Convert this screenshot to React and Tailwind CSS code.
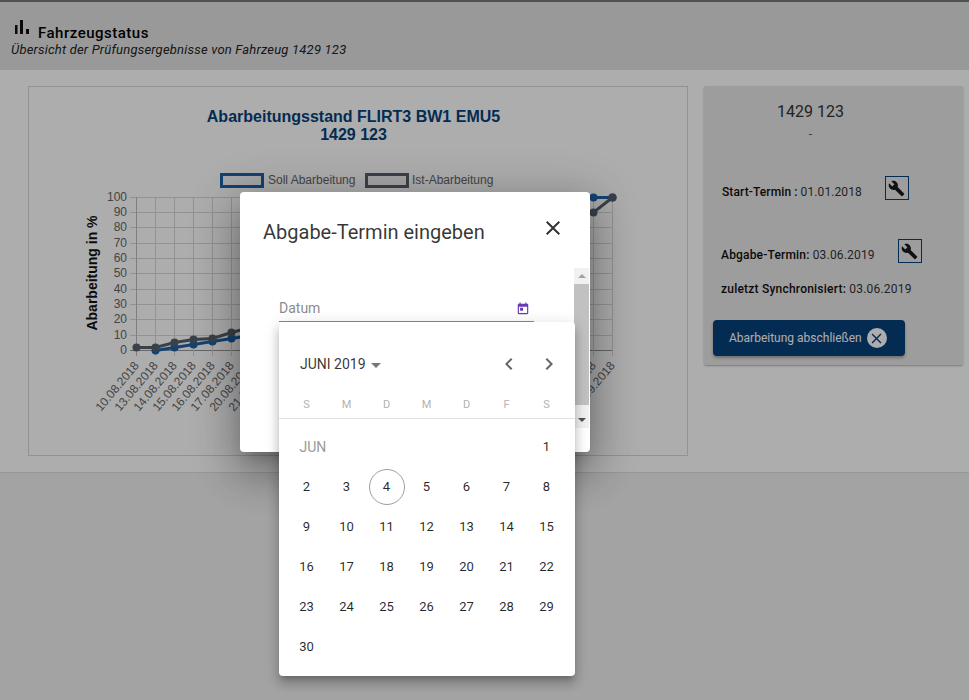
const BLUE = "#1d62a8";
const NAVY = "#07417a";
const DARK = "#58606e";

const dates = ["10.08.2018", "13.08.2018", "14.08.2018", "15.08.2018", "16.08.2018", "17.08.2018", "20.08.2018", "21.08.2018", "22.08.2018", "23.08.2018", "24.08.2018", "27.08.2018", "28.08.2018", "29.08.2018", "30.08.2018", "31.08.2018", "03.09.2018", "04.09.2018", "05.09.2018", "06.09.2018", "07.09.2018", "10.09.2018", "11.09.2018", "12.09.2018", "13.09.2018", "14.09.2018"];
const ist = [2, 2, 5, 7, 8, 12, 15, 20, 25, 30, 35, 40, 44, 48, 52, 56, 60, 64, 68, 72, 76, 80, 84, 87, 90, 100];
const soll = [null, 0, 2, 4, 6, 8, 10, 14, 20, 26, 32, 38, 44, 50, 56, 62, 68, 74, 80, 86, 92, 96, 98, 100, 100, 100];

const px = (i) => Math.round(136 + i * 19.05) + 0.5;
const py = (v) => Math.round(350 - v * 1.533) + 0.5;

function Wrench() {
	return (
		<svg viewBox="0 0 24 24" className="w-[17px] h-[17px]" fill="#1a1a1a">
			<path d="M22.7 19l-9.1-9.1c.9-2.3.4-5-1.5-6.9-2-2-5-2.4-7.4-1.3L9 6 6 9 1.6 4.7C.4 7.1.9 10.1 2.9 12.1c1.9 1.9 4.6 2.4 6.9 1.5l9.1 9.1c.4.4 1 .4 1.4 0l2.3-2.3c.5-.4.5-1.1.1-1.4z" />
		</svg>
	);
}

function CloseIcon({ className, fill }) {
	return (
		<svg viewBox="0 0 24 24" className={className} fill={fill}>
			<path d="M19 6.41 17.59 5 12 10.59 6.41 5 5 6.41 10.59 12 5 17.59 6.41 19 12 13.41 17.59 19 19 17.59 13.41 12z" />
		</svg>
	);
}

function Chevron({ d }) {
	return (
		<svg viewBox="0 0 24 24" className="w-[24px] h-[24px]" fill="#666">
			<path d={d} />
		</svg>
	);
}

function Chart() {
	const line = (data) =>
		data
			.map((v, i) => (v === null ? null : `${px(i)},${py(v)}`))
			.filter(Boolean)
			.join(" ");
	return (
		<svg viewBox="29 150 658 305" className="block w-[658px] h-[305px]">
			<rect x="221.5" y="174.5" width="41" height="12" fill="#f4f7fa" stroke={BLUE} strokeWidth="3" />
			<text x="268" y="184" fontSize="12" fill="#666">Soll Abarbeitung</text>
			<rect x="366.5" y="174.5" width="41" height="12" fill="#f4f4f4" stroke={DARK} strokeWidth="3" />
			<text x="412" y="184" fontSize="12" fill="#666">Ist-Abarbeitung</text>

			{Array.from({ length: 11 }, (_, i) => (
				<g key={i}>
					<line x1="130" x2="613" y1={py(i * 10)} y2={py(i * 10)} stroke={i === 0 ? "#999" : "#d8d8d8"} />
					<text x="127" y={py(i * 10) + 3} fontSize="12" fill="#666" textAnchor="end">{i * 10}</text>
				</g>
			))}
			{dates.map((d, i) => (
				<g key={d}>
					<line x1={px(i)} x2={px(i)} y1="197" y2="356" stroke={i === 0 ? "#bbb" : "#d8d8d8"} />
					<text
						x={px(i) + 3}
						y="366"
						fontSize="12"
						fill="#666"
						textAnchor="end"
						transform={`rotate(-50 ${px(i) + 3} 366)`}
					>
						{d}
					</text>
				</g>
			))}
			<text
				x="97"
				y="273"
				fontSize="14"
				fontWeight="700"
				fill="#111"
				textAnchor="middle"
				transform="rotate(-90 97 273)"
			>
				Abarbeitung in %
			</text>

			<polyline points={line(soll)} fill="none" stroke={BLUE} strokeWidth="3" />
			<polyline points={line(ist)} fill="none" stroke={DARK} strokeWidth="3" />
			{soll.map((v, i) => v !== null && <circle key={i} cx={px(i)} cy={py(v)} r="4" fill={BLUE} />)}
			{ist.map((v, i) => <circle key={i} cx={px(i)} cy={py(v)} r="4" fill={DARK} />)}
		</svg>
	);
}

function DatePicker() {
	const weeks = [
		[2, 3, 4, 5, 6, 7, 8],
		[9, 10, 11, 12, 13, 14, 15],
		[16, 17, 18, 19, 20, 21, 22],
		[23, 24, 25, 26, 27, 28, 29],
		[30],
	];
	return (
		<div className="absolute left-[39px] top-[130px] w-[296px] h-[354px] bg-white rounded-[4px] shadow-[0_5px_5px_-3px_rgba(0,0,0,0.2),0_8px_10px_1px_rgba(0,0,0,0.14),0_3px_14px_2px_rgba(0,0,0,0.12)] z-10">
			<div className="flex items-center h-[24px] mt-[30px] pl-[21px] pr-[14px]">
				<span className="text-[14px] text-[rgba(0,0,0,0.8)]">JUNI 2019</span>
				<span className="ml-[5px] mt-[2px] w-0 h-0 border-x-[5px] border-x-transparent border-t-[5px] border-t-[#777]" />
				<span className="ml-auto"><Chevron d="M15.41 7.41 14 6l-6 6 6 6 1.41-1.41L10.83 12z" /></span>
				<span className="ml-[16px]"><Chevron d="M10 6 8.59 7.41 13.17 12l-4.58 4.59L10 18l6-6z" /></span>
			</div>
			<div className="grid grid-cols-7 w-[280px] ml-[7.5px] mt-[21px] h-[16px] items-center text-center text-[11px] text-[#b3b3b3]">
				{["S", "M", "D", "M", "D", "F", "S"].map((d, i) => (
					<span key={i}>{d}</span>
				))}
			</div>
			<div className="h-px bg-[#e0e0e0] mt-[5px]" />
			<div className="grid grid-cols-7 w-[280px] ml-[7.5px] mt-[8px] auto-rows-[40px] items-center text-center text-[13px] text-[rgba(0,0,0,0.85)]">
				<span className="col-span-6 text-left pl-[13px] text-[14px] text-[#9a9a9a]">JUN</span>
				<span>1</span>
				{weeks.flat().map((d) => (
					<span key={d} className="flex justify-center items-center">
						{d === 4 ? (
							<span className="w-[36px] h-[36px] flex items-center justify-center rounded-full border border-[#9e9e9e]">4</span>
						) : (
							d
						)}
					</span>
				))}
			</div>
		</div>
	);
}

function Modal() {
	return (
		<div className="absolute left-[240px] top-[192px] w-[350px] h-[260px] bg-white rounded-[4px] shadow-[0_11px_15px_-7px_rgba(0,0,0,0.2),0_24px_38px_3px_rgba(0,0,0,0.18),0_9px_46px_8px_rgba(0,0,0,0.2)] font-['Roboto',sans-serif]">
			<div className="flex items-center justify-between h-[76px] pl-[23px] pr-[25px]">
				<h2 className="text-[20px] text-[rgba(0,0,0,0.8)] mt-[4px]">Abgabe-Termin eingeben</h2>
				<CloseIcon className="w-[24px] h-[24px] mb-[4px]" fill="#333" />
			</div>
			<div className="flex h-[160px] justify-between">
				<div className="w-[255px] ml-[39px] h-[54px] flex items-end border-b border-[#8a8a8a]">
					<div className="flex items-center justify-between w-full pb-[2px]">
						<span className="text-[14px] text-[#8c8c8c]">Datum</span>
						<svg viewBox="0 0 24 24" className="w-[14px] h-[14px] mr-[4px]" fill="#673ab7">
							<path d="M19 3h-1V1h-2v2H8V1H6v2H5C3.9 3 3 3.9 3 5v14c0 1.1.9 2 2 2h14c1.1 0 2-.9 2-2V5c0-1.1-.9-2-2-2zm0 16H5V8h14v11zM7 10h5v5H7z" />
						</svg>
					</div>
				</div>
				<div className="w-[15px] mr-px bg-[#f1f1f1] flex flex-col items-center">
					<span className="mt-[6px] w-0 h-0 border-x-[4px] border-x-transparent border-b-[4px] border-b-[#a3a3a3]" />
					<div className="w-full h-[121px] mt-[6px] bg-[#c1c1c1]" />
					<span className="mt-[13px] w-0 h-0 border-x-[4px] border-x-transparent border-t-[4px] border-t-[#505050]" />
				</div>
			</div>
			<DatePicker />
		</div>
	);
}

export default function App() {
	return (
		<div className="relative h-[700px] overflow-hidden bg-[#f0f0f0] font-['Roboto',sans-serif]">
			<header className="h-[70px] bg-[#e2e2e2] border-t-2 border-[#777] pl-[11px]">
				<div className="flex items-end h-[37px]">
					<svg viewBox="0 0 16 14" className="w-[16px] h-[14px] ml-[4px] mb-[5px] shrink-0" fill="#111">
						<rect x="0" y="5" width="2.5" height="9" />
						<rect x="5" y="0" width="3" height="14" />
						<rect x="11" y="9" width="3" height="5" />
					</svg>
					<h1 className="ml-[7px] text-[15px] leading-[18px] font-medium text-black tracking-[0.5px] mb-[-3px]">Fahrzeugstatus</h1>
				</div>
				<p className="text-[13px] leading-[16px] italic text-[#222] mt-[3px] tracking-[0.2px]">Übersicht der Prüfungsergebnisse von Fahrzeug 1429 123</p>
			</header>

			<main className="flex items-start h-[403px] pt-[16px] pl-[28px] bg-white border-b border-[#ddd]">
				<section className="w-[660px] h-[370px] border border-[#d8d8d8] font-['Liberation_Sans',sans-serif]">
					<div className="h-[63px] pt-[21px] pr-[9px] text-center text-[16px] leading-[18px] font-bold text-[#07417a]">
						<p>Abarbeitungsstand FLIRT3 BW1 EMU5</p>
						<p>1429 123</p>
					</div>
					<Chart />
				</section>

				<aside className="w-[259px] h-[279px] ml-[16px] bg-[#e8e8e8] rounded-[2px] shadow-[0_1px_2px_rgba(0,0,0,0.3)] pl-[9px] flex flex-col">
					<div className="w-[195px] text-center mt-[17px] text-[16px] leading-[18px] text-[#333]">1429 123</div>
					<div className="w-[195px] text-center mt-[5px] text-[12px] leading-[16px] text-[#555]">-</div>
					<div className="flex items-center h-[24px] mt-[34px] ml-[9px] text-[12px] text-[#333] tracking-[0.1px]">
						<span className="mt-[8px]"><b className="font-medium text-[#111]">Start-Termin : </b>01.01.2018</span>
						<span className="ml-[23px] w-[24px] h-[24px] border border-[#07417a] flex items-center justify-center"><Wrench /></span>
					</div>
					<div className="flex items-center h-[24px] mt-[39px] ml-[8px] text-[12px] text-[#333] tracking-[0.18px]">
						<span className="mt-[8px]"><b className="font-medium text-[#111]">Abgabe-Termin: </b>03.06.2019</span>
						<span className="ml-[23px] w-[24px] h-[24px] border border-[#07417a] flex items-center justify-center"><Wrench /></span>
					</div>
					<div className="ml-[8px] mt-[18px] text-[12px] leading-[16px] text-[#333] tracking-[0.22px]"><b className="font-medium text-[#111]">zuletzt Synchronisiert: </b>03.06.2019</div>
					<button className="flex items-center w-[192px] h-[36px] mt-[23px] pl-[16px] rounded-[4px] bg-[#07417a] text-[12px] text-white shadow-[0_2px_3px_rgba(0,0,0,0.3)]">
						Abarbeitung abschließen
						<span className="ml-[5px] w-[20px] h-[20px] rounded-full bg-white flex items-center justify-center">
							<CloseIcon className="w-[17px] h-[17px]" fill={NAVY} />
						</span>
					</button>
				</aside>
			</main>

			<div className="absolute inset-0 bg-black/32" />
			<Modal />
		</div>
	);
}
